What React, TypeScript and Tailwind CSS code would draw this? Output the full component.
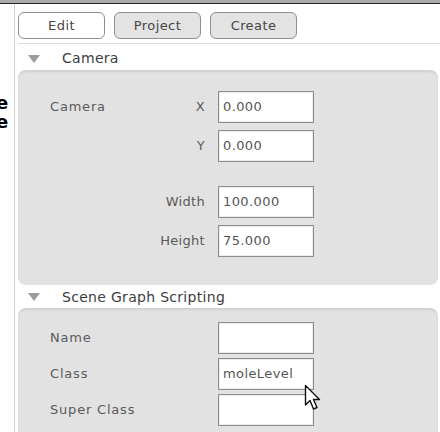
import React from "react";

const font = { fontFamily: '"DejaVu Sans", Verdana, sans-serif' };

function Disclosure() {
  return (
    <svg width="12" height="8" viewBox="0 0 12 8" className="shrink-0">
      <polygon points="0,0 12,0 6,8" fill="#9c9c9c" />
    </svg>
  );
}

function SectionHeader({ title }: { title: string }) {
  return (
    <div className="flex items-center pl-[10px] h-full">
      <Disclosure />
      <span className="ml-[22px] text-[14px] tracking-[0.3px] text-[#3e3e3e]">{title}</span>
    </div>
  );
}

function Field({ value = "" }: { value?: string }) {
  return (
    <div className="ml-[13px] flex h-[32px] w-[96px] items-center border border-[#8c8c8c] bg-white pl-[4px] text-[13px] tracking-[0.4px] text-[#555] shadow-[inset_0_0_0_1px_#ececec]">
      {value}
    </div>
  );
}

function Row({
  left,
  right,
  value,
}: {
  left?: string;
  right?: string;
  value?: string;
}) {
  return (
    <div className="flex items-center">
      <div className="flex w-[155px] items-center justify-between text-[13px] tracking-[0.8px] text-[#5a5a5a]">
        <span>{left}</span>
        <span className="tracking-[0.3px]">{right}</span>
      </div>
      <Field value={value} />
    </div>
  );
}

function Button({ label, active }: { label: string; active?: boolean }) {
  return (
    <div
      className={`flex h-[27px] w-[87px] items-center justify-center rounded-[6px] border border-[#8e8e8e] text-[13px] tracking-[0.4px] text-[#454545] ${
        active ? "bg-white" : "bg-[#e3e3e3]"
      }`}
    >
      {label}
    </div>
  );
}

export default function App() {
  return (
    <div className="relative flex h-[432px] w-[440px] flex-col overflow-hidden bg-white" style={font}>
      {/* window top edge */}
      <div className="h-[3px] bg-[#aaaaaa]" />
      <div className="h-px bg-[#262626]" />

      <div className="flex flex-1">
        {/* neighbouring pane, clipped */}
        <div className="w-[14px] overflow-hidden">
          <div className="mt-[89px] -ml-[4px] flex flex-col text-[18px] font-bold leading-[19px] text-black">
            <span>e</span>
            <span>e</span>
          </div>
        </div>

        <div className="flex flex-1 flex-col border-l border-[#d2d2d2] pl-[3px]">
          {/* toolbar */}
          <div className="flex gap-[9px] pt-[8px]">
            <Button label="Edit" active />
            <Button label="Project" />
            <Button label="Create" />
          </div>
          <div className="mt-[4px] h-px bg-[#dddddd]" />

          {/* Camera */}
          <div className="h-[26px] pt-[3px]">
            <SectionHeader title="Camera" />
          </div>
          <div className="mr-[2px] flex h-[215px] flex-col rounded-[8px] bg-[#e2e2e2] pl-[32px] pt-[21px] shadow-[inset_0_2px_2px_rgba(0,0,0,0.08)]">
            <Row left="Camera" right="X" value="0.000" />
            <div className="mt-[7px]">
              <Row right="Y" value="0.000" />
            </div>
            <div className="mt-[24px]">
              <Row right="Width" value="100.000" />
            </div>
            <div className="mt-[7px]">
              <Row right="Height" value="75.000" />
            </div>
          </div>

          {/* Scene Graph Scripting */}
          <div className="h-[23px] pt-[1px]">
            <SectionHeader title="Scene Graph Scripting" />
          </div>
          <div className="mr-[2px] flex flex-1 flex-col gap-[4px] rounded-t-[8px] bg-[#e2e2e2] pl-[32px] pt-[14px] shadow-[inset_0_2px_2px_rgba(0,0,0,0.08)]">
            <Row left="Name" />
            <Row left="Class" value="moleLevel" />
            <Row left="Super Class" />
          </div>
        </div>
      </div>

      {/* mouse pointer */}
      <svg
        className="absolute left-[304px] top-[384px]"
        width="20"
        height="30"
        viewBox="0 0 20 30"
      >
        <path
          d="M1.5 1.5 L1.5 21 L6 16.5 L9.5 25 L13 23.5 L9.5 15.5 L15.5 15.5 Z"
          fill="#ffffff"
          stroke="#111111"
          strokeWidth="1.4"
          strokeLinejoin="round"
        />
      </svg>
    </div>
  );
}
